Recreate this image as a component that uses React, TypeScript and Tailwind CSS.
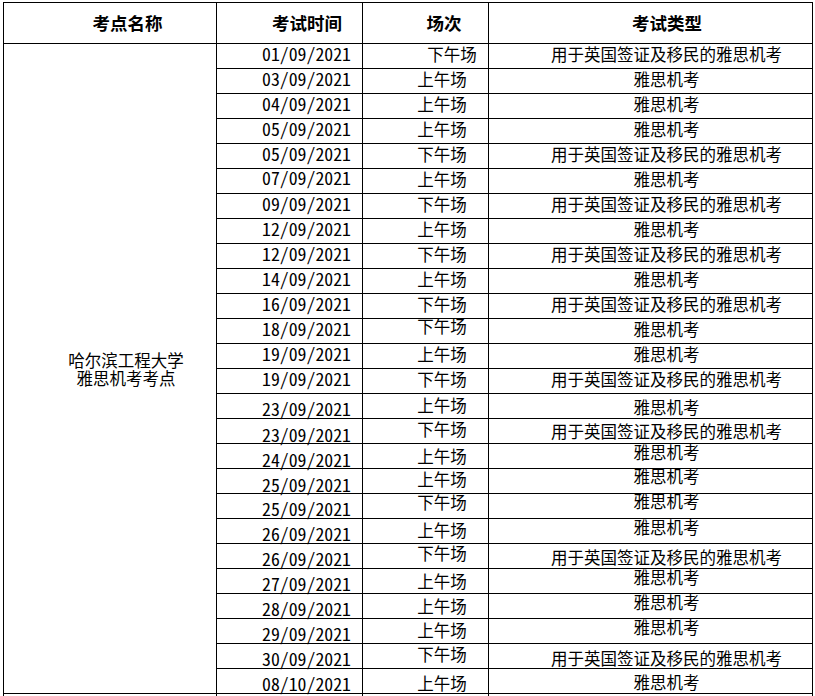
import React from "react";

const L = "用于英国签证及移民的雅思机考";
const Y = "雅思机考";
const AM = "上午场";
const PM = "下午场";

type Row = {
  d: string;
  s: string;
  t: string;
  dc?: string;
  sc?: string;
  tc?: string;
  sp?: string;
};

const rows: Row[] = [
  { d: "01/09/2021", s: PM, t: L, sp: "pl-[53px]" },
  { d: "03/09/2021", s: AM, t: Y },
  { d: "04/09/2021", s: AM, t: Y },
  { d: "05/09/2021", s: AM, t: Y },
  { d: "05/09/2021", s: PM, t: L },
  { d: "07/09/2021", s: AM, t: Y, dc: "pb-[6px]" },
  { d: "09/09/2021", s: PM, t: L },
  { d: "12/09/2021", s: AM, t: Y },
  { d: "12/09/2021", s: PM, t: L },
  { d: "14/09/2021", s: AM, t: Y },
  { d: "16/09/2021", s: PM, t: L },
  { d: "18/09/2021", s: PM, t: Y, sc: "pb-[9px]" },
  { d: "19/09/2021", s: AM, t: Y },
  { d: "19/09/2021", s: PM, t: L },
  { d: "23/09/2021", s: AM, t: Y, dc: "pt-[5px]", sc: "pb-[1px]", tc: "pt-[3px]" },
  { d: "23/09/2021", s: PM, t: L, dc: "pt-[7px]", tc: "pt-[1px]" },
  { d: "24/09/2021", s: AM, t: Y, dc: "pt-[7px]", sc: "py-0", tc: "pb-[8px]" },
  { d: "25/09/2021", s: AM, t: Y, dc: "pt-[7px]", tc: "pb-[9px]" },
  { d: "25/09/2021", s: PM, t: Y, dc: "pt-[6px]", sc: "pb-[8px]", tc: "pb-[9px]" },
  { d: "26/09/2021", s: AM, t: Y, dc: "pt-[6px]", sc: "pb-[2px]", tc: "pb-[8px]" },
  { d: "26/09/2021", s: PM, t: L, dc: "pt-[6px]", sc: "pb-[6px]", tc: "pt-[2px]" },
  { d: "27/09/2021", s: AM, t: Y, dc: "pt-[6px]", sc: "pt-[1px]", tc: "pb-[7px]" },
  { d: "28/09/2021", s: AM, t: Y, dc: "pt-[6px]", sc: "pt-[1px]", tc: "pb-[8px]" },
  { d: "29/09/2021", s: AM, t: Y, dc: "pt-[6px]", sc: "pb-[2px]", tc: "pb-[8px]" },
  { d: "30/09/2021", s: PM, t: L, dc: "pt-[6px]", tc: "pt-[5px]" },
  { d: "08/10/2021", s: AM, t: Y, dc: "pt-[6px]", sc: "pt-[4px]", tc: "pt-[2px]" },
];

const cjk = "font-['Noto_Sans_CJK_SC',sans-serif]";
const mono = "font-['Noto_Sans_Mono_CJK_SC','Liberation_Mono',monospace]";

export default function App() {
  return (
    <div className="w-[815px] h-[696px] overflow-hidden bg-white text-black">
      <div
        className={`ml-[3px] mt-[2px] grid grid-cols-[213px_146px_126px_324px] grid-rows-[41px_repeat(27,25px)] border-l border-t border-black ${cjk} w-max`}
      >
        <div className="flex items-center justify-center pl-[35px] border-r border-b border-black text-[17.5px] font-bold leading-none">
          考点名称
        </div>
        <div className="flex items-center justify-center pl-[35px] border-r border-b border-black text-[17.5px] font-bold leading-none">
          考试时间
        </div>
        <div className="flex items-center justify-center pl-[37px] border-r border-b border-black text-[17.5px] font-bold leading-none">
          场次
        </div>
        <div className="flex items-center justify-center pl-[33px] border-r border-b border-black text-[17.5px] font-bold leading-none">
          考试类型
        </div>

        <div className="row-span-26 flex flex-col items-center justify-center pl-[32px] border-r border-b border-black text-[16.5px] leading-[18px]">
          <span>哈尔滨工程大学</span>
          <span>雅思机考考点</span>
        </div>

        {rows.map((r, i) => (
          <React.Fragment key={i}>
            <div
              className={`col-start-2 flex items-center justify-center pl-[34px] border-r border-b border-black text-[17.8px] leading-none ${mono} ${r.dc ?? "pb-[4px]"}`}
            >
              {r.d}
            </div>
            <div
              className={`flex items-center justify-center ${r.sp ?? "pl-[33px]"} border-r border-b border-black text-[16.5px] leading-none whitespace-nowrap ${r.sc ?? "pb-[3px]"}`}
            >
              {r.s}
            </div>
            <div
              className={`flex items-center justify-center pl-[32px] border-r border-b border-black text-[16.5px] leading-none whitespace-nowrap ${r.tc ?? "pb-[3px]"}`}
            >
              {r.t}
            </div>
          </React.Fragment>
        ))}

        <div className="border-r border-b border-black" />
        <div className="border-r border-b border-black" />
        <div className="border-r border-b border-black" />
        <div className="border-r border-b border-black" />
      </div>
    </div>
  );
}
